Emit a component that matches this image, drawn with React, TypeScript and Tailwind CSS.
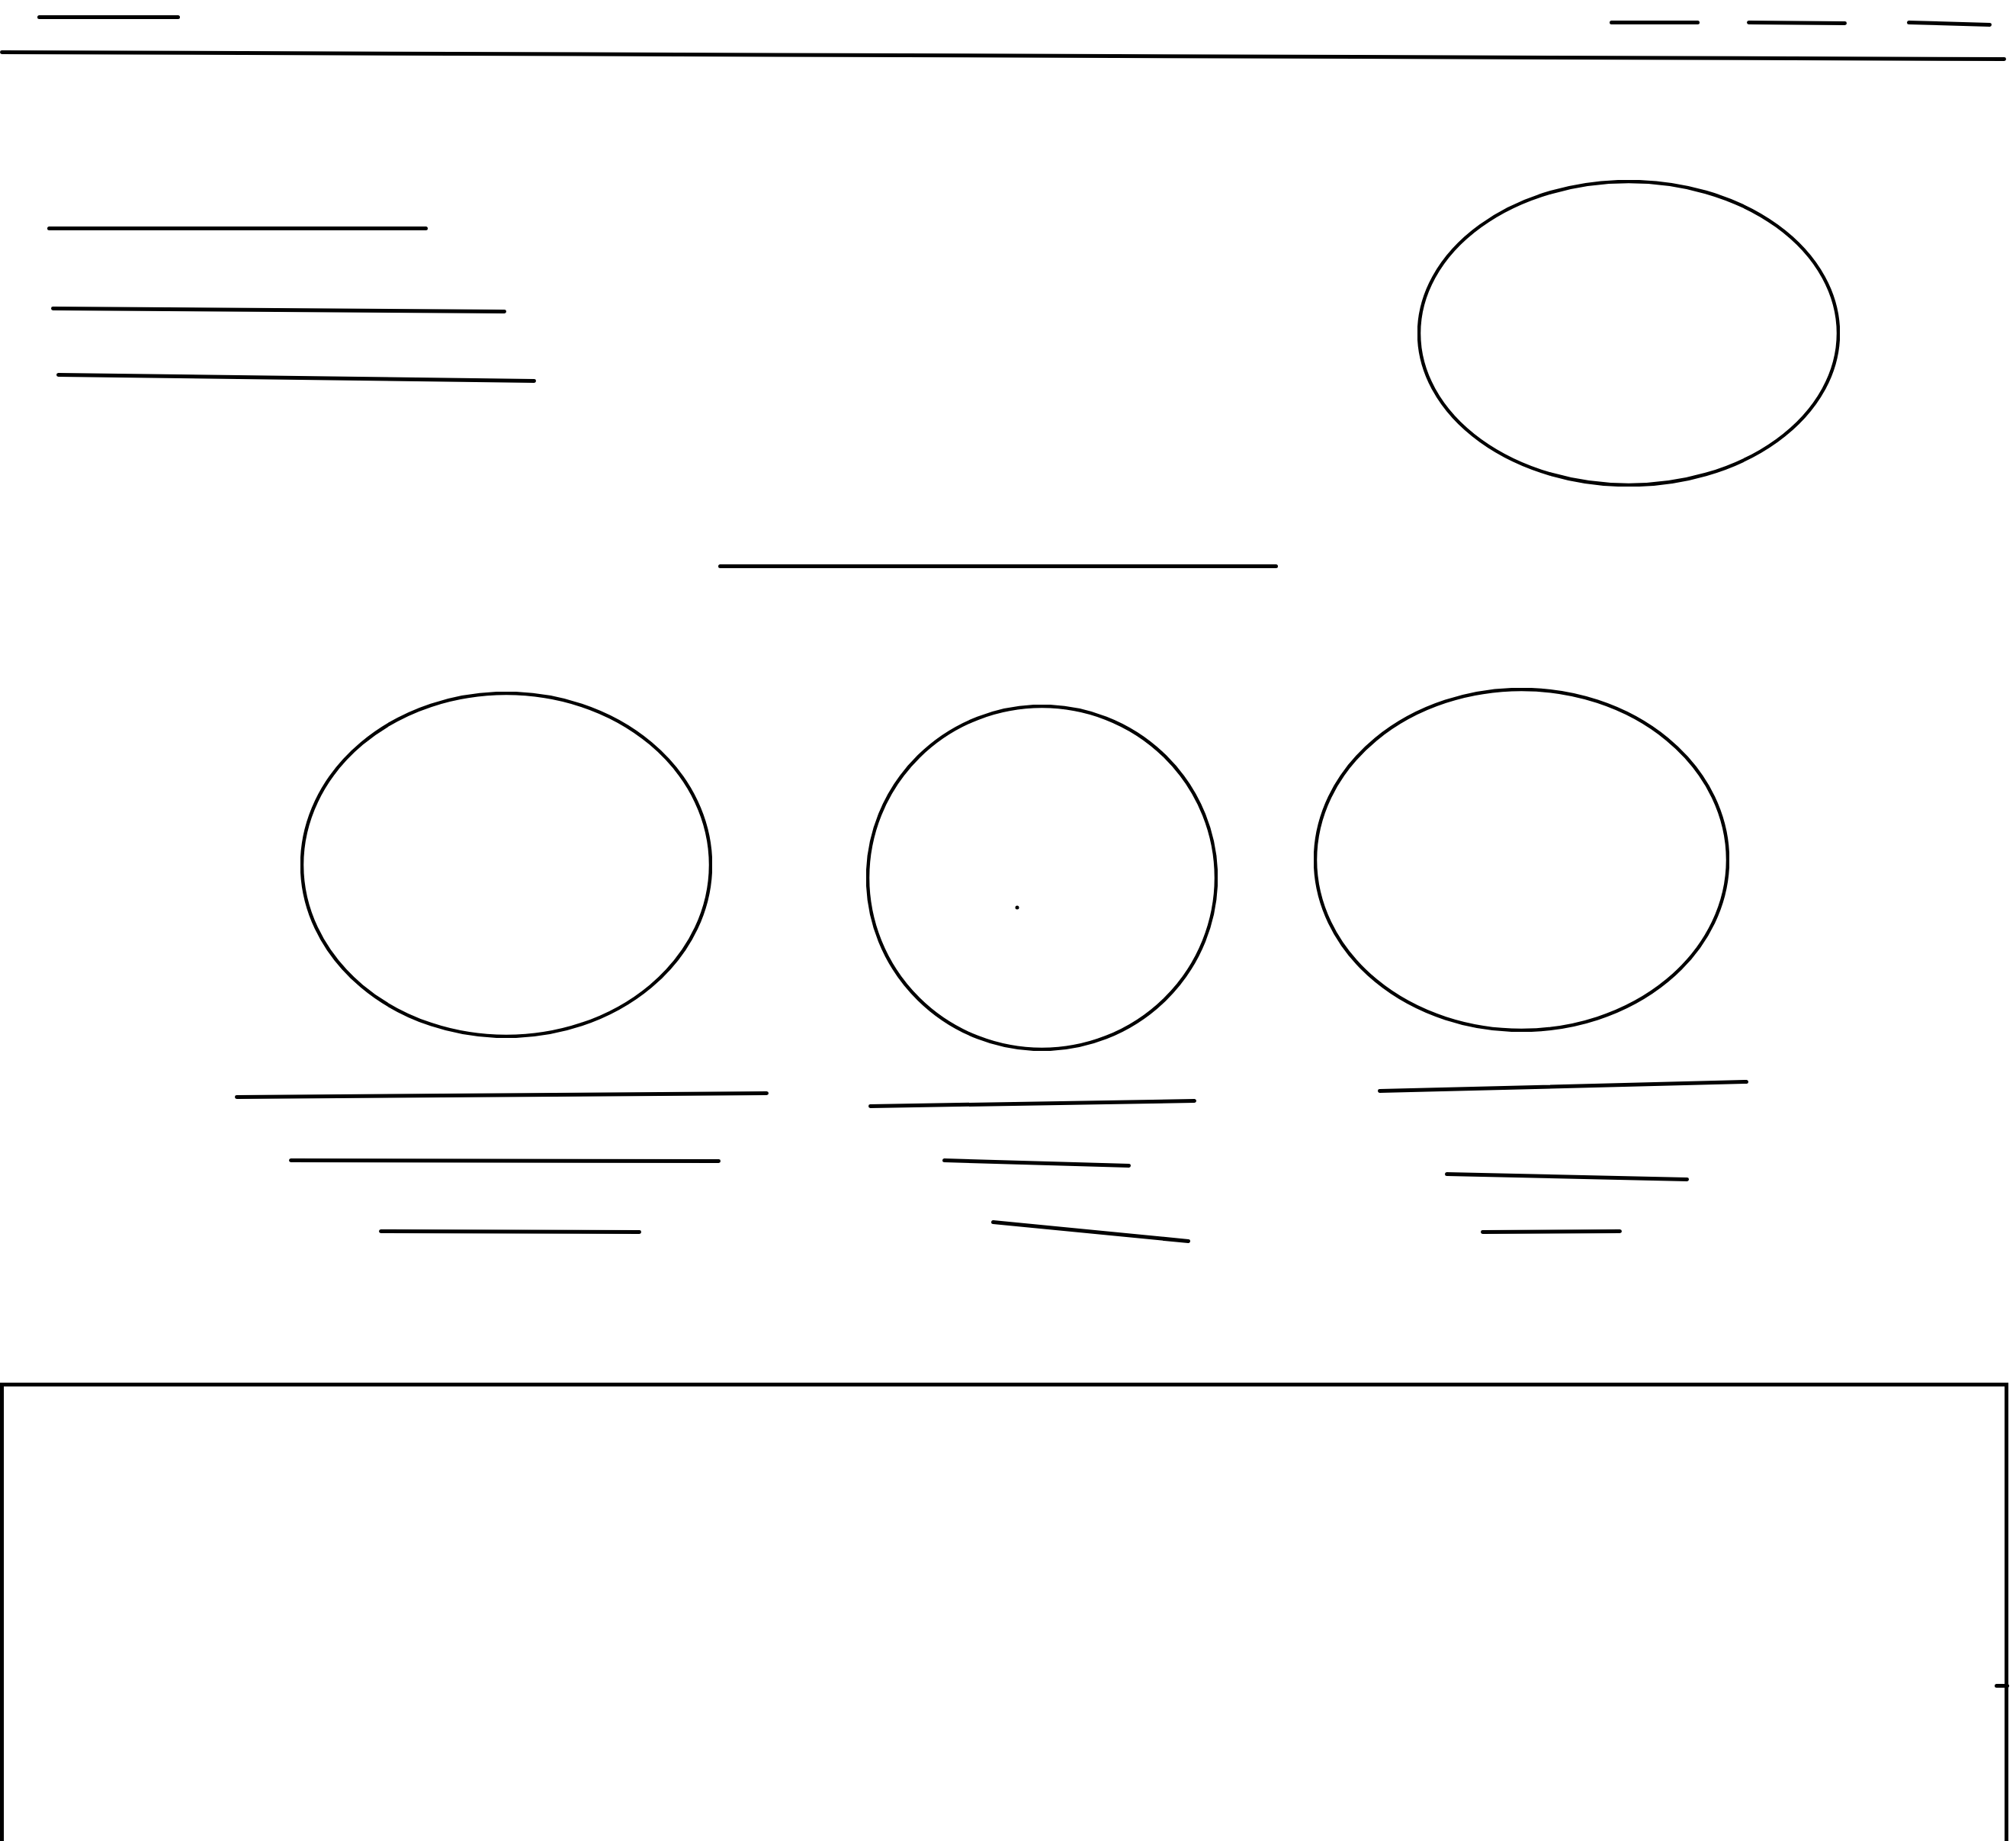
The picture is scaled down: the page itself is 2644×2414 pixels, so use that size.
import clsx from 'clsx';

// wireframe strokes: black, round caps
const SW = 5;

function Stroke({ w, dy = 0, className }: { w: number; dy?: number; className?: string }) {
  const y1 = dy < 0 ? 2.5 - dy : 2.5;
  return (
    <svg width={w + 5} height={Math.abs(dy) + 5} className={clsx('block shrink-0', className)}>
      <line x1={2.5} y1={y1} x2={w + 2.5} y2={y1 + dy} stroke="black" strokeWidth={SW} strokeLinecap="round" />
    </svg>
  );
}

function Oval({ w, h, className, children }: { w: number; h: number; className?: string; children?: React.ReactNode }) {
  return (
    <svg width={w + 4} height={h + 4} className={clsx('block shrink-0', className)}>
      <ellipse cx={w / 2 + 2} cy={h / 2 + 2} rx={w / 2} ry={h / 2} fill="none" stroke="black" strokeWidth={4.5} />
      {children}
    </svg>
  );
}

export default function App() {
  return (
    <div className="flex h-[2414px] w-[2644px] flex-col overflow-hidden bg-white">
      {/* nav */}
      <header className="flex h-[66px] items-start">
        <Stroke w={182} className="ml-[49px] mt-[20px]" />
        <nav className="ml-auto mr-[32px] mt-[27px] flex items-start">
          <Stroke w={113} />
          <Stroke w={126} dy={1} className="ml-[62px]" />
          <Stroke w={106} dy={3} className="ml-[79px]" />
        </nav>
      </header>
      <Stroke w={2626} dy={9} />

      {/* hero */}
      <section className="flex items-start">
        <div className="flex flex-col items-start">
          <Stroke w={494} className="ml-[62px] mt-[217px]" />
          <Stroke w={592} dy={4} className="ml-[67px] mt-[100px]" />
          <Stroke w={624} dy={8} className="ml-[74px] mt-[78px]" />
        </div>
        <Oval w={550} h={398} className="ml-auto mr-[231px] mt-[156px]" />
      </section>

      <Stroke w={729} className="ml-[942px] mt-[102px]" />

      {/* cards */}
      <section className="flex items-start">
        <div className="ml-[308px] flex w-[700px] flex-col items-start">
          <Oval w={536} h={450} className="ml-[86px] mt-[162px]" />
          <Stroke w={695} dy={-5} className="mt-[70px]" />
          <Stroke w={561} dy={1} className="ml-[71px] mt-[78px]" />
          <Stroke w={339} dy={1} className="ml-[189px] mt-[87px]" />
        </div>
        <div className="ml-[128px] flex w-[465px] flex-col items-start">
          <Oval w={457} h={450} className="mt-[179px]">
            <circle cx={198} cy={266} r={2.5} fill="black" />
          </Oval>
          <Stroke w={425} dy={-7} className="ml-[3px] mt-[63px]" />
          <Stroke w={242} dy={7} className="ml-[100px] mt-[66px]" />
          <Stroke w={256} dy={25} className="ml-[164px] mt-[69px]" />
        </div>
        <div className="ml-[122px] flex w-[572px] flex-col items-start">
          <Oval w={541} h={447} className="mt-[157px]" />
          <Stroke w={481} dy={-12} className="ml-[84px] mt-[63px]" />
          <Stroke w={315} dy={7} className="ml-[172px] mt-[104px]" />
          <Stroke w={180} dy={-1} className="ml-[219px] mt-[63px]" />
        </div>
      </section>

      {/* footer */}
      <footer className="mt-[183px] flex w-[2634px] flex-1 flex-col border-[5px] border-b-0 border-black">
        <Stroke w={14} className="mr-[-6px] mt-[390px] self-end" />
      </footer>
    </div>
  );
}
